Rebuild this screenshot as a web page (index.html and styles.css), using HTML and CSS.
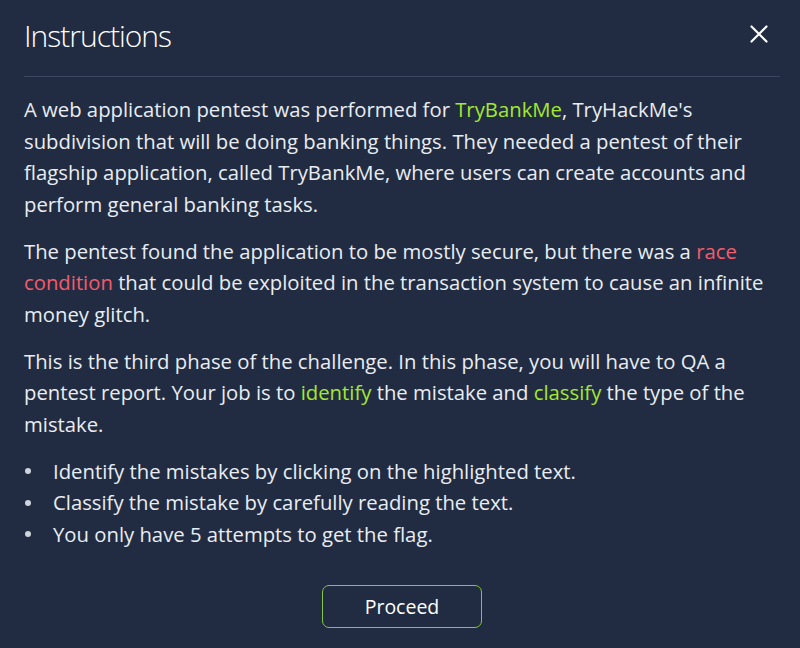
FILE: index.html
```html
<!DOCTYPE html>
<html>
<head>
<meta charset="utf-8">
<link rel="stylesheet" href="styles.css">
</head>
<body>
<div class="modal">
  <header class="modal-head">
    <h1 class="title">Instructions</h1>
    <button class="close" aria-label="Close">
      <svg width="18" height="18" viewBox="0 0 18 18"><path d="M1.5 1.5 L16.5 16.5 M16.5 1.5 L1.5 16.5" stroke="#ffffff" stroke-width="2.2" stroke-linecap="round"/></svg>
    </button>
  </header>
  <div class="modal-body">
    <p>A web application pentest was performed for <span class="green">TryBankMe</span>, TryHackMe's subdivision that will be doing banking things. They needed a pentest of their flagship application, called TryBankMe, where users can create accounts and perform general banking tasks.</p>
    <p>The pentest found the application to be mostly secure, but there was a <span class="red">race condition</span> that could be exploited in the transaction system to cause an infinite money glitch.</p>
    <p>This is the third phase of the challenge. In this phase, you will have to QA a pentest report. Your job is to <span class="green">identify</span> the mistake and <span class="green">classify</span> the type of the mistake.</p>
    <ul class="list">
      <li>Identify the mistakes by clicking on the highlighted text.</li>
      <li>Classify the mistake by carefully reading the text.</li>
      <li>You only have 5 attempts to get the flag.</li>
    </ul>
  </div>
  <div class="modal-foot">
    <button class="proceed">Proceed</button>
  </div>
</div>
</body>
</html>
```
FILE: styles.css
```css
html, body {
  margin: 0;
  padding: 0;
  background: #212c42;
  height: 100%;
}
body {
  font-family: "Open Sans", "Noto Sans", sans-serif;
  color: #e9edf3;
}
.modal {
  padding: 0 20px 0 24px;
}
.modal-head {
  display: flex;
  justify-content: space-between;
  align-items: center;
  height: 76px;
  border-bottom: 1px solid #3a4660;
}
.title {
  margin: 0;
  font-size: 30px;
  font-weight: 300;
  color: #ffffff;
  letter-spacing: -1px;
  padding-bottom: 6px;
}
.close {
  background: none;
  border: none;
  padding: 0;
  margin-right: 12px;
  margin-bottom: 9px;
  width: 18px;
  height: 18px;
  display: flex;
  cursor: pointer;
}
.modal-body {
  padding-top: 17px;
  padding-right: 4px;
  font-size: 20.3px;
  line-height: 31.5px;
}
.modal-body p {
  margin: 0 0 15.5px 0;
}
.green { color: #a4e82e; }
.red { color: #f45b6c; }
.list {
  margin: 0;
  padding: 0;
  list-style: none;
}
.list li {
  display: flex;
  align-items: center;
}
.list li::before {
  content: "";
  flex: none;
  width: 6px;
  height: 6px;
  border-radius: 50%;
  background: #cfd4dc;
  margin-left: 1px;
  margin-right: 22px;
}
.modal-foot {
  display: flex;
  justify-content: center;
  padding-top: 35px;
}
.proceed {
  width: 160px;
  height: 43px;
  background: transparent;
  border: 1.5px solid #84c443;
  border-radius: 7px;
  color: #ffffff;
  font-family: "Open Sans", "Noto Sans", sans-serif;
  font-size: 19.5px;
}
```
